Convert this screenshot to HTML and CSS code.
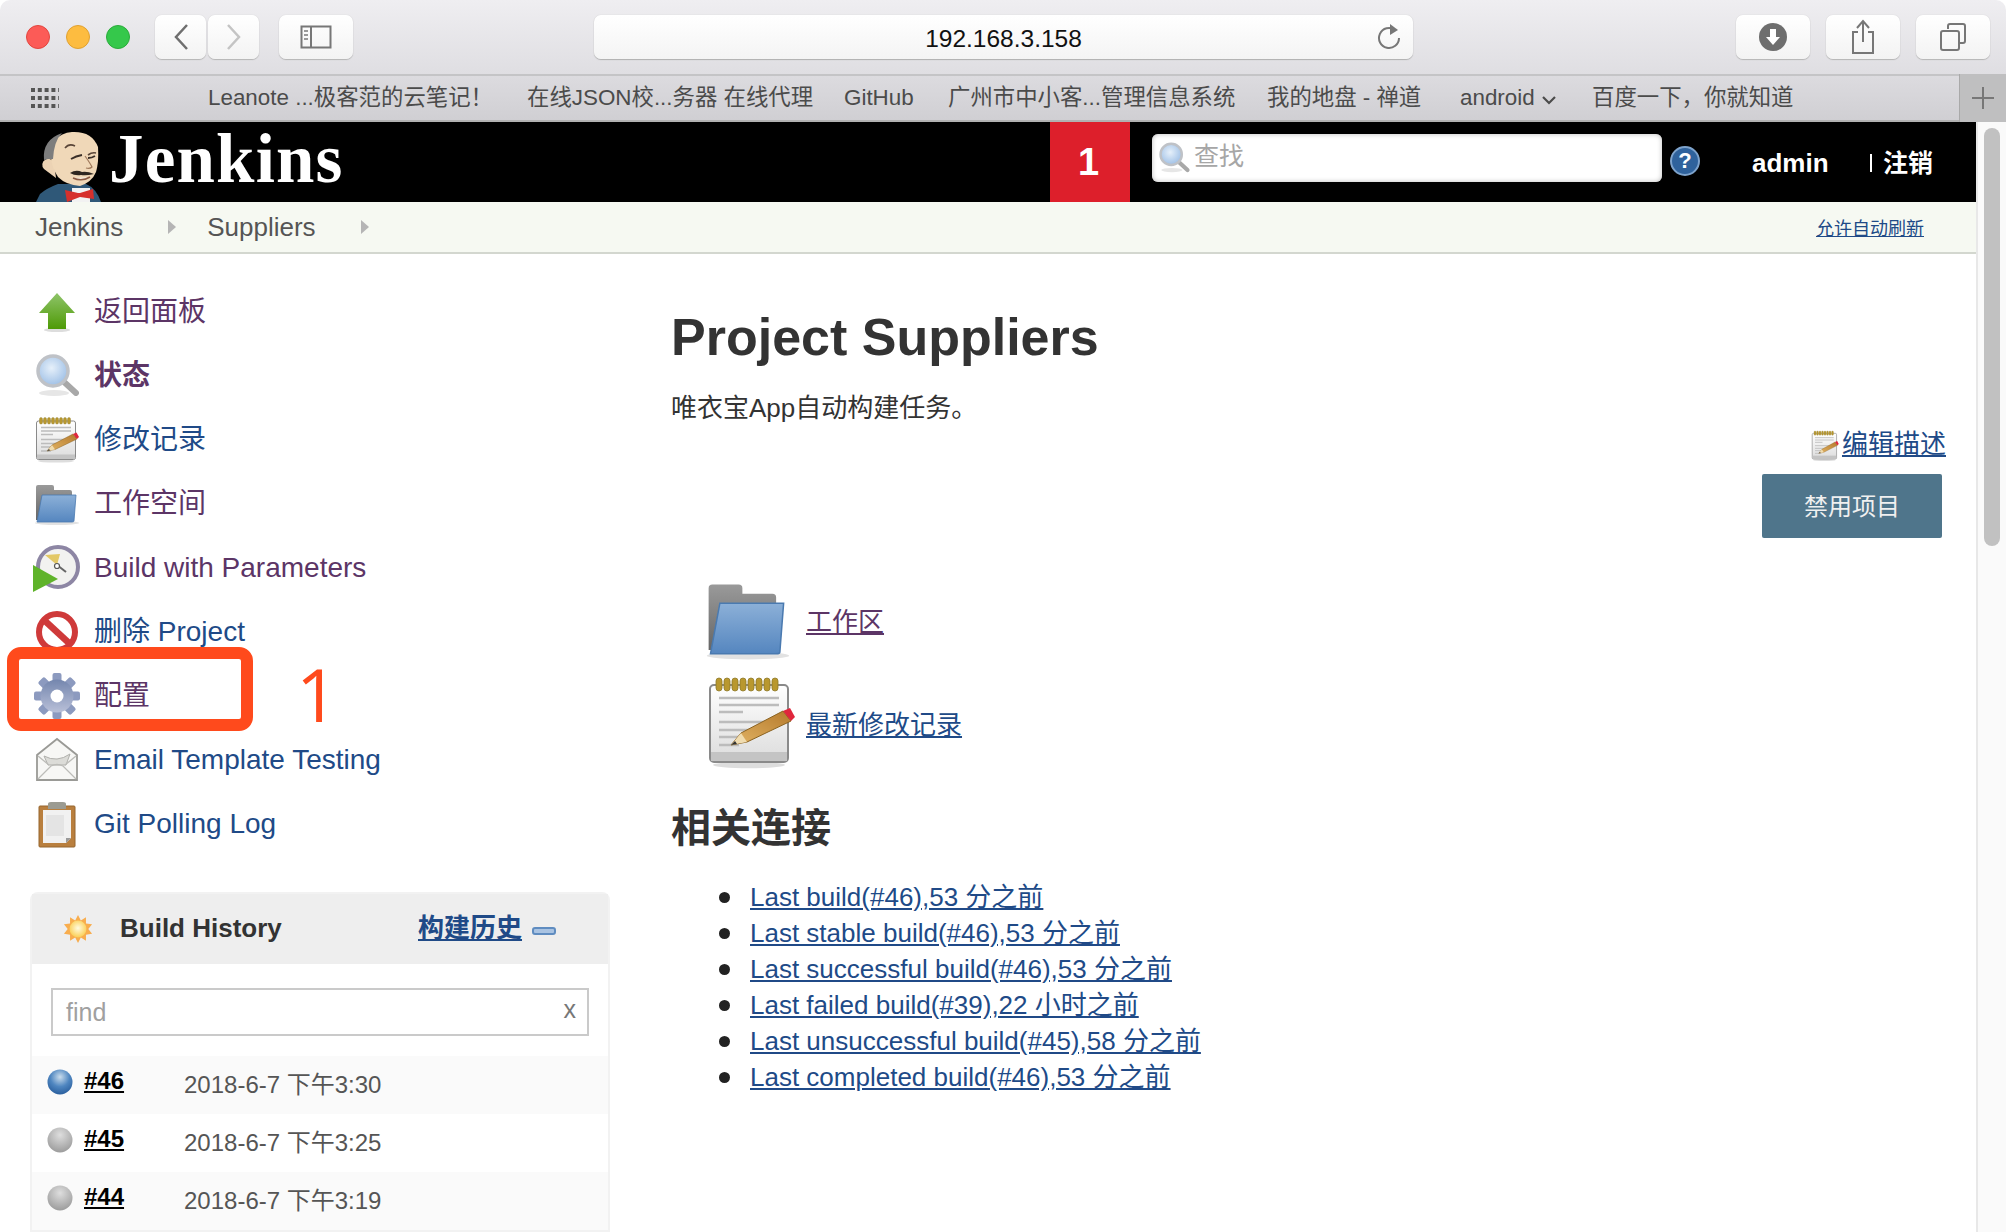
FILE: index.html
```html
<!DOCTYPE html>
<html lang="zh-CN">
<head>
  <meta charset="UTF-8">
  <title>Suppliers [Jenkins]</title>
  <link rel="stylesheet" href="styles.css">
</head>
<body>
  <svg class="defs" xmlns="http://www.w3.org/2000/svg">
    <defs>
      <linearGradient id="g-arrow" x1="0" y1="0" x2="0" y2="1"><stop offset="0" stop-color="#8fc46a"/><stop offset="1" stop-color="#4e9a06"/></linearGradient>
      <linearGradient id="g-page" x1="0" y1="0" x2="0" y2="1"><stop offset="0" stop-color="#fff"/><stop offset="1" stop-color="#dcdcdc"/></linearGradient>
      <linearGradient id="g-folder" x1="0" y1="0" x2="0" y2="1"><stop offset="0" stop-color="#8cb0d8"/><stop offset="1" stop-color="#5586bf"/></linearGradient>
      <linearGradient id="g-back" x1="0" y1="0" x2="0" y2="1"><stop offset="0" stop-color="#9a9a9a"/><stop offset="1" stop-color="#666"/></linearGradient>
      <linearGradient id="g-pencil" x1="0" y1="1" x2="1" y2="0"><stop offset="0" stop-color="#e3b566"/><stop offset="1" stop-color="#b57a2c"/></linearGradient>
      <linearGradient id="g-gear" x1="0" y1="0" x2="0" y2="1"><stop offset="0" stop-color="#7486ae"/><stop offset="1" stop-color="#b9c0d8"/></linearGradient>
      <radialGradient id="g-lens" cx=".45" cy=".4" r=".6"><stop offset="0" stop-color="#e6f0fa"/><stop offset="1" stop-color="#9fc0e6"/></radialGradient>
      <radialGradient id="g-blue" cx=".5" cy=".3" r=".7"><stop offset="0" stop-color="#c9dcec"/><stop offset=".55" stop-color="#4f86c0"/><stop offset="1" stop-color="#2a5f9e"/></radialGradient>
      <radialGradient id="g-grey" cx=".5" cy=".3" r=".7"><stop offset="0" stop-color="#dedede"/><stop offset="1" stop-color="#9c9c9c"/></radialGradient>
      <radialGradient id="g-sun" cx=".5" cy=".45" r=".55"><stop offset="0" stop-color="#fffbe0"/><stop offset="1" stop-color="#fbcf55"/></radialGradient>

      <symbol id="i-arrow" viewBox="0 0 48 48">
        <ellipse cx="24" cy="42" rx="13" ry="2" fill="#ddd"/>
        <path d="M24 5 42 25H33V41H15V25H6Z" fill="url(#g-arrow)"/>
      </symbol>
      <symbol id="i-search" viewBox="0 0 48 48">
        <ellipse cx="21" cy="41" rx="15" ry="3" fill="#e6e6e6"/>
        <path d="M30 29 43 41" stroke="#a8a8a8" stroke-width="6" stroke-linecap="round"/>
        <circle cx="20" cy="19" r="15" fill="url(#g-lens)" stroke="#bfc2c7" stroke-width="3.5"/>
      </symbol>
      <symbol id="i-notepad" viewBox="0 0 48 48">
        <ellipse cx="23" cy="45" rx="18" ry="1.6" fill="#ddd"/>
        <rect x="3.5" y="5" width="39" height="38.5" rx="2" fill="url(#g-page)" stroke="#8a8a8a"/>
        <rect x="4" y="38.5" width="38" height="4.5" fill="#c4c4c4"/>
        <g fill="#b9982e" stroke="#8e7a2a" stroke-width=".4">
          <rect x="6.500" y="1.500" width="3" height="6.500" rx="1.500"/><rect x="10.500" y="1.500" width="3" height="6.500" rx="1.500"/><rect x="14.500" y="1.500" width="3" height="6.500" rx="1.500"/><rect x="18.500" y="1.500" width="3" height="6.500" rx="1.500"/><rect x="22.500" y="1.500" width="3" height="6.500" rx="1.500"/><rect x="26.500" y="1.500" width="3" height="6.500" rx="1.500"/><rect x="30.500" y="1.500" width="3" height="6.500" rx="1.500"/><rect x="34.500" y="1.500" width="3" height="6.500" rx="1.500"/>
        </g>
        <path d="M8 11.500H38M8 15H38M8 18.500H20M8 23.500H38M8 27.500H28M8 31H24M8 35H18" stroke="#bcbcbc" stroke-width="1.300"/>
        <path d="M14 35 19 29 40 18 44 23 22 33.500Z" fill="url(#g-pencil)" stroke="#8a6220" stroke-width=".5"/>
        <path d="M14 35 19 29 22 33.500Z" fill="#f0dcb0"/>
        <path d="M14 35 16 33 17 34.500Z" fill="#333"/>
        <path d="M40 18 43.500 16.500 46 21 44 23Z" fill="#e0263c"/>
      </symbol>
      <symbol id="i-folder" viewBox="0 0 48 48">
        <ellipse cx="24" cy="43" rx="22" ry="2" fill="#e2e2e2"/>
        <path d="M3 7Q3 5 5 5H19Q21 5 21 7V10H37Q39 10 39 12V40H3Z" fill="url(#g-back)"/>
        <path d="M9 15H43L41 41Q41 42 39 42H4Z" fill="url(#g-folder)" stroke="#4a7ab0" stroke-width=".8"/>
      </symbol>
      <symbol id="i-clock" viewBox="0 0 48 48">
        <circle cx="25" cy="23" r="20" fill="#f2f2f0" stroke="#8d86a4" stroke-width="4"/>
        <path d="M12 11 27 10 24 21Z" fill="#e3c866"/>
        <path d="M24 21 33 28" stroke="#666" stroke-width="2"/>
        <circle cx="24" cy="22" r="2.500" fill="#fff" stroke="#555" stroke-width="1.200"/>
        <path d="M0 21 25 35 0 48Z" fill="#5fb32a"/>
      </symbol>
      <symbol id="i-stop" viewBox="0 0 48 48">
        <circle cx="24" cy="24" r="18" fill="#fff" stroke="#cf3a3a" stroke-width="6"/>
        <path d="M11 12 37 36" stroke="#cf3a3a" stroke-width="6.500"/>
      </symbol>
      <symbol id="i-gear" viewBox="0 0 48 48">
        <g fill="#8c9abf">
          <rect x="19.500" y="1" width="9" height="46" rx="2"/>
          <rect x="19.500" y="1" width="9" height="46" rx="2" transform="rotate(45 24 24)"/>
          <rect x="19.500" y="1" width="9" height="46" rx="2" transform="rotate(90 24 24)"/>
          <rect x="19.500" y="1" width="9" height="46" rx="2" transform="rotate(135 24 24)"/>
        </g>
        <circle cx="24" cy="24" r="16.500" fill="url(#g-gear)"/>
        <circle cx="24" cy="24" r="6.500" fill="#fff"/>
      </symbol>
      <symbol id="i-mail" viewBox="0 0 48 48">
        <path d="M4 19 24 3 44 19V44H4Z" fill="#f7f7f5" stroke="#9a9a96" stroke-width="1.800"/>
        <path d="M11 20Q24 27 37 18L33 29H15Z" fill="#dcdcd8" stroke="#b0b0ac"/>
        <path d="M5 43 18 30Q24 27 30 30L43 43M5 20 16 29M43 20 32 29" fill="none" stroke="#bcbcb8" stroke-width="1.300"/>
      </symbol>
      <symbol id="i-clip" viewBox="0 0 48 48">
        <rect x="6" y="6" width="36" height="41" rx="1" fill="#b97f3e" stroke="#96662e"/>
        <path d="M10 10H38V38L33 43H10Z" fill="#f1f1f1"/>
        <path d="M33 43V38H38Z" fill="#9a9a9a"/>
        <path d="M13 15H31V36H13Z" fill="#e4e4e4"/>
        <path d="M15 9V4Q15 2 18 2H30Q33 2 33 4V9Z" fill="#9b9b92"/>
      </symbol>
      <symbol id="i-sun" viewBox="0 0 32 32">
        <path d="M16 1 19 7 24.500 3.500 24.500 10 31 11 27 16 31 21 24.500 22 24.500 28.500 19 25 16 31 13 25 7.500 28.500 7.500 22 1 21 5 16 1 11 7.500 10 7.500 3.500 13 7Z" fill="#f8ad4e"/>
        <circle cx="16" cy="16" r="9" fill="url(#g-sun)"/>
      </symbol>
      <symbol id="i-butler" viewBox="0 0 92 80">
        <path d="M16 80 20 72Q27 66 38 62H66Q76 66 81 80Z" fill="#2f5878"/>
        <path d="M52 66H70V80H52Z" fill="#f2f2f2"/>
        <path d="M45 68 58 71 60 71 73 67 74 77 60 75 47 80Z" fill="#d6302c"/>
        <path d="M24 47A6 6 0 1 1 34 41L36 56Z" fill="#ecd3b4"/>
        <path d="M31 36Q30 12 52 10 72 9 78 25 79 40 76 50 72 60 60 64 46 63 38 55 32 46 31 36Z" fill="#f0d8b8"/>
        <path d="M24 38Q22 18 42 11 34 19 33 37L28 37Z" fill="#7d7d7d"/>
        <path d="M45 26Q49 21 55 24M68 33Q72 30 76 31" stroke="#5a4638" stroke-width="1.600" fill="none"/>
        <path d="M51 37Q56 34 62 33M68 36Q72 36 75 34" stroke="#3a2f28" stroke-width="1.800" fill="none"/>
        <path d="M65 34Q70 41 72 45 70 47 66 46" stroke="#a07a5c" stroke-width="1.200" fill="none"/>
        <path d="M50 51Q56 47 62 50 67 49 74 52 66 54 61 53 55 54 50 51Z" fill="#2e2620"/>
        <path d="M53 56Q62 60 70 55" stroke="#8a5a44" stroke-width="1.500" fill="#f7ece0"/>
      </symbol>
    </defs>
  </svg>

  <div class="window">
    <div class="toolbar">
      <div class="lights"><span class="light red"></span><span class="light yellow"></span><span class="light green"></span></div>
      <div class="nav-pair">
        <div class="tool-btn nav-btn"><svg width="16" height="28" viewBox="0 0 16 28"><path d="M14 2 3 14 14 26" fill="none" stroke="#6f6f6f" stroke-width="2.500"/></svg></div>
        <div class="tool-btn nav-btn"><svg width="16" height="28" viewBox="0 0 16 28"><path d="M2 2 13 14 2 26" fill="none" stroke="#c4c4c4" stroke-width="2.500"/></svg></div>
      </div>
      <div class="tool-btn side-btn"><svg width="32" height="24" viewBox="0 0 32 24"><rect x="1.500" y="1.500" width="29" height="21" fill="none" stroke="#777" stroke-width="2"/><path d="M11 2V22" stroke="#777" stroke-width="2"/><path d="M4 6H8M4 10H8M4 14H8" stroke="#999" stroke-width="2"/></svg></div>
      <div class="address">
        <span class="address-text">192.168.3.158</span>
        <svg class="reload" width="26" height="28" viewBox="0 0 26 28"><path d="M19 7A10 10 0 1 0 23 15" fill="none" stroke="#777" stroke-width="2"/><path d="M14 1 22 7 14 12Z" fill="#777"/></svg>
      </div>
      <div class="tool-right">
        <div class="tool-btn right-btn"><svg width="30" height="30" viewBox="0 0 30 30"><circle cx="15" cy="15" r="14" fill="#6e6e6e"/><path d="M12 7H18V15H22L15 23 8 15H12Z" fill="#fff"/></svg></div>
        <div class="tool-btn right-btn"><svg width="26" height="36" viewBox="0 0 26 36"><path d="M8 13H3V34H23V13H18M13 23V3M7 9 13 2 19 9" fill="none" stroke="#777" stroke-width="2"/></svg></div>
        <div class="tool-btn right-btn"><svg width="28" height="28" viewBox="0 0 28 28"><path d="M9 6V3Q9 1 11 1H24Q26 1 26 3V18Q26 20 24 20H20" fill="none" stroke="#777" stroke-width="2"/><rect x="2" y="8" width="18" height="19" rx="2" fill="none" stroke="#777" stroke-width="2"/></svg></div>
      </div>
    </div>

    <div class="bookmarks">
      <svg class="grid-icon" width="30" height="20" viewBox="0 0 30 20"><path d="M1 2H29M1 10H29M1 18H29" stroke="#555" stroke-width="4" stroke-dasharray="4 2.800"/></svg>
      <span class="bm bm-1">Leanote ...极客范的云笔记！</span>
      <span class="bm bm-2">在线JSON校...务器 在线代理</span>
      <span class="bm bm-3">GitHub</span>
      <span class="bm bm-4">广州市中小客...管理信息系统</span>
      <span class="bm bm-5">我的地盘 - 禅道</span>
      <span class="bm bm-6">android <svg width="14" height="10" viewBox="0 0 14 10"><path d="M1 2 7 8 13 2" fill="none" stroke="#4b4b4b" stroke-width="2.200"/></svg></span>
      <span class="bm bm-7">百度一下，你就知道</span>
      <div class="new-tab"><svg width="24" height="24" viewBox="0 0 24 24"><path d="M12 1V23M1 12H23" stroke="#777" stroke-width="2"/></svg></div>
    </div>

    <div class="viewport">
      <div class="page">
        <header class="jk-header">
          <svg class="butler" width="92" height="80"><use href="#i-butler"/></svg>
          <span class="jk-title">Jenkins</span>
          <span class="jk-badge">1</span>
          <div class="jk-search">
            <svg width="34" height="34"><use href="#i-search"/></svg>
            <span class="jk-placeholder">查找</span>
          </div>
          <span class="jk-help">?</span>
          <span class="jk-user">admin</span>
          <span class="jk-logout"><span class="jk-sep"></span>注销</span>
        </header>

        <div class="crumbs">
          <span class="crumb">Jenkins</span><span class="crumb-arrow"></span>
          <span class="crumb">Suppliers</span><span class="crumb-arrow"></span>
          <a class="auto-refresh">允许自动刷新</a>
        </div>

        <div class="layout">
          <aside class="side">
            <ul class="tasks">
              <li class="task visited"><svg width="48" height="48"><use href="#i-arrow"/></svg>返回面板</li>
              <li class="task visited current"><svg width="48" height="48"><use href="#i-search"/></svg>状态</li>
              <li class="task"><svg width="48" height="48"><use href="#i-notepad"/></svg>修改记录</li>
              <li class="task visited"><svg width="48" height="48"><use href="#i-folder"/></svg>工作空间</li>
              <li class="task visited"><svg width="48" height="48"><use href="#i-clock"/></svg>Build with Parameters</li>
              <li class="task"><svg width="48" height="48"><use href="#i-stop"/></svg>删除 Project</li>
              <li class="task visited"><svg width="48" height="48"><use href="#i-gear"/></svg>配置</li>
              <li class="task"><svg width="48" height="48"><use href="#i-mail"/></svg>Email Template Testing</li>
              <li class="task"><svg width="48" height="48"><use href="#i-clip"/></svg>Git Polling Log</li>
            </ul>

            <section class="history">
              <div class="history-head">
                <svg width="30" height="30"><use href="#i-sun"/></svg>
                <span class="history-title">Build History</span>
                <a class="history-link">构建历史</a>
                <span class="history-minus"></span>
              </div>
              <div class="history-find">
                <div class="find-box"><span>find</span><span class="find-x">x</span></div>
              </div>
              <div class="build-row">
                <svg width="26" height="28" viewBox="0 0 26 28"><circle cx="13" cy="14" r="12.500" fill="url(#g-blue)"/></svg>
                <a class="build-num">#46</a><span class="build-date">2018-6-7 下午3:30</span>
              </div>
              <div class="build-row">
                <svg width="26" height="28" viewBox="0 0 26 28"><circle cx="13" cy="14" r="12.500" fill="url(#g-grey)"/></svg>
                <a class="build-num">#45</a><span class="build-date">2018-6-7 下午3:25</span>
              </div>
              <div class="build-row">
                <svg width="26" height="28" viewBox="0 0 26 28"><circle cx="13" cy="14" r="12.500" fill="url(#g-grey)"/></svg>
                <a class="build-num">#44</a><span class="build-date">2018-6-7 下午3:19</span>
              </div>
            </section>
          </aside>

          <main class="main">
            <h1 class="title">Project Suppliers</h1>
            <p class="desc">唯衣宝App自动构建任务。</p>
            <div class="edit-row">
              <svg class="edit-icon" width="30" height="32" viewBox="0 0 48 48" preserveAspectRatio="none"><use href="#i-notepad"/></svg>
              <a class="link">编辑描述</a>
            </div>
            <div class="disable-row"><button class="disable-btn">禁用项目</button></div>

            <div class="big-link">
              <svg class="big-folder" width="90" height="90"><use href="#i-folder"/></svg>
              <a class="link purple">工作区</a>
            </div>
            <div class="big-link">
              <svg width="96" height="96"><use href="#i-notepad"/></svg>
              <a class="link">最新修改记录</a>
            </div>

            <h2 class="subtitle">相关连接</h2>
            <ul class="permalinks">
              <li><a class="link">Last build(#46),53 分之前</a></li>
              <li><a class="link">Last stable build(#46),53 分之前</a></li>
              <li><a class="link">Last successful build(#46),53 分之前</a></li>
              <li><a class="link">Last failed build(#39),22 小时之前</a></li>
              <li><a class="link">Last unsuccessful build(#45),58 分之前</a></li>
              <li><a class="link">Last completed build(#46),53 分之前</a></li>
            </ul>
          </main>
        </div>
      </div>
      <div class="scrollbar"><div class="scroll-thumb"></div></div>

      <div class="callout"></div>
      <div class="callout-num">1</div>
    </div>
  </div>
</body>
</html>
```

FILE: styles.css
```css
html, body {
  margin: 0;
  padding: 0;
  background: #fff;
}
body {
  width: 2006px;
  height: 1232px;
  overflow: hidden;
  font-family: "Liberation Sans", "Noto Sans CJK SC", sans-serif;
}
ul {
  list-style: none;
  margin: 0;
  padding: 0;
}
.defs {
  position: absolute;
  width: 0;
  height: 0;
}
.window {
  display: flex;
  flex-direction: column;
  height: 1232px;
  border-radius: 10px 10px 0 0;
  overflow: hidden;
}

/* browser bar */
.toolbar {
  display: flex;
  align-items: center;
  height: 74px;
  box-sizing: border-box;
  padding: 0 16px 0 26px;
  background: linear-gradient(#efeef1, #dfdee2);
}
.lights {
  display: flex;
  gap: 16px;
  width: 129px;
}
.light {
  width: 24px;
  height: 24px;
  border-radius: 50%;
  box-sizing: border-box;
}
.light.red { background: #fc5b57; border: 1px solid #e2463f; }
.light.yellow { background: #fdbc40; border: 1px solid #e0a131; }
.light.green { background: #35c84b; border: 1px solid #2bab3b; }
.tool-btn {
  display: flex;
  align-items: center;
  justify-content: center;
  height: 44px;
  box-sizing: border-box;
  background: linear-gradient(#fff, #f3f3f3);
  border-radius: 7px;
  box-shadow: 0 1px 1px #b5b5b5, 0 0 1px #c4c4c4;
}
.nav-pair {
  display: flex;
  gap: 2px;
}
.nav-btn { width: 51px; }
.side-btn {
  width: 74px;
  margin-left: 20px;
}
.address {
  position: relative;
  display: flex;
  align-items: center;
  justify-content: center;
  width: 819px;
  height: 44px;
  margin-left: 241px;
  background: linear-gradient(#fff, #f4f4f4);
  border-radius: 7px;
  box-shadow: 0 1px 1px #b0b0b0, 0 0 1px #bdbdbd;
}
.address-text {
  font-size: 24.500px;
  color: #111;
  margin-top: 3px;
}
.reload {
  position: absolute;
  right: 11px;
  top: 8px;
}
.tool-right {
  display: flex;
  gap: 16px;
  margin-left: 323px;
}
.right-btn { width: 74px; }

.bookmarks {
  position: relative;
  display: flex;
  align-items: center;
  height: 48px;
  box-sizing: border-box;
  background: linear-gradient(#dcdbdf, #d0cfd3);
  border-top: 2px solid #c4c4c6;
  border-bottom: 2px solid #b1b1b1;
  font-size: 22.400px;
  color: #4b4b4b;
}
.grid-icon { margin-left: 30px; }
.bm {
  white-space: nowrap;
  line-height: 30px;
}
.bm-1 { margin-left: 148px; width: 319px; }
.bm-2 { width: 317px; }
.bm-3 { width: 104px; }
.bm-4 { width: 319px; }
.bm-5 { width: 193px; }
.bm-6 { width: 132px; }
.bm-6 svg { margin-left: 1px; }
.new-tab {
  position: absolute;
  right: 0;
  top: -2px;
  bottom: -2px;
  width: 47px;
  display: flex;
  align-items: center;
  justify-content: center;
  background: #bfbfc0;
  border-left: 1px solid #a9a9a9;
  box-sizing: border-box;
}

/* page */
.viewport {
  position: relative;
  display: flex;
  flex: 1;
  min-height: 0;
}
.page {
  width: 1976px;
  overflow: hidden;
}
.scrollbar {
  width: 30px;
  box-sizing: border-box;
  background: #fafafa;
  border-left: 2px solid #e8e8e8;
  padding: 6px 6px 0 6px;
}
.scroll-thumb {
  width: 16px;
  height: 418px;
  background: #c1c1c1;
  border-radius: 8px;
}

.jk-header {
  display: flex;
  align-items: center;
  height: 80px;
  background: #000;
  color: #fff;
  overflow: hidden;
}
.butler {
  margin-left: 20px;
  flex: none;
  filter: blur(0.5px);
}
.jk-title {
  font-family: "Liberation Serif", serif;
  font-weight: bold;
  font-size: 69px;
  line-height: 72px;
  margin: -7px 0 0 -3px;
  width: 941px;
  letter-spacing: 1.2px;
}
.jk-badge {
  display: flex;
  align-items: center;
  justify-content: center;
  width: 80px;
  height: 80px;
  padding-right: 3px;
  box-sizing: border-box;
  background: #dd1f2b;
  font-size: 38px;
  font-weight: bold;
}
.jk-search {
  display: flex;
  align-items: center;
  width: 510px;
  height: 48px;
  margin: -8px 0 0 22px;
  padding-left: 5px;
  box-sizing: border-box;
  background: #fff;
  border-radius: 6px;
  box-shadow: inset 0 0 5px #bbb;
}
.jk-placeholder {
  font-size: 25px;
  line-height: 30px;
  color: #a6a6a6;
  margin: -4px 0 0 3px;
}
.jk-help {
  width: 30px;
  height: 30px;
  margin: -2px 0 0 8px;
  line-height: 26px;
  text-align: center;
  box-sizing: border-box;
  border-radius: 50%;
  background: #2f629c;
  border: 2px solid #7ea3cc;
  color: #fff;
  font-size: 22px;
  font-weight: bold;
}
.jk-user {
  margin: 2px 0 0 52px;
  width: 119px;
  font-size: 26px;
  font-weight: bold;
}
.jk-logout {
  display: flex;
  align-items: center;
  font-size: 25px;
  line-height: 30px;
  font-weight: bold;
  margin: 2px 0 0 -1px;
}
.jk-sep {
  width: 2px;
  height: 18px;
  margin-right: 11px;
  background: #fff;
}

.crumbs {
  display: flex;
  align-items: center;
  height: 52px;
  box-sizing: border-box;
  padding: 0 52px 0 35px;
  background: #f6f9f2;
  border-bottom: 2px solid #d3d7cf;
  font-size: 26px;
  color: #555;
}
.crumb-arrow {
  width: 0;
  height: 0;
  margin: 0 31px 0 45px;
  border-left: 8px solid #b5b5b5;
  border-top: 7px solid transparent;
  border-bottom: 7px solid transparent;
}
.auto-refresh {
  margin-left: auto;
  font-size: 18px;
  color: #204a87;
  text-decoration: underline;
}

.layout {
  display: flex;
}
.side {
  width: 671px;
  flex: none;
  box-sizing: border-box;
  padding: 26px 0 0 30px;
}
.task {
  display: flex;
  align-items: center;
  gap: 13px;
  height: 64px;
  margin-left: 3px;
  font-size: 28px;
  line-height: 32px;
  color: #204a87;
}
.task svg { filter: blur(0.4px); }
.task.visited { color: #5c3566; }
.task.current { font-weight: bold; }
.history {
  width: 580px;
  margin-top: 36px;
  box-sizing: border-box;
  border: 2px solid #f2f2f2;
  border-radius: 8px 8px 0 0;
}
.history-head {
  display: flex;
  align-items: center;
  height: 70px;
  padding-left: 31px;
  background: #eee;
}
.history-title {
  width: 298px;
  margin: -2px 0 0 27px;
  font-size: 26px;
  line-height: 30px;
  font-weight: bold;
  color: #333;
}
.history-link {
  margin-top: -2px;
  font-size: 26px;
  line-height: 30px;
  font-weight: bold;
  color: #204a87;
  text-decoration: underline;
}
.history-minus {
  width: 24px;
  height: 8px;
  margin: 4px 0 0 10px;
  box-sizing: border-box;
  background: #a9c3e2;
  border: 2px solid #5f8cc0;
  border-radius: 3px;
}
.history-find {
  padding: 24px 19px 20px 19px;
}
.find-box {
  display: flex;
  justify-content: space-between;
  align-items: center;
  height: 48px;
  box-sizing: border-box;
  padding: 0 11px 0 13px;
  border: 2px solid #cacaca;
  font-size: 25px;
  color: #a0a0a0;
}
.find-x {
  font-size: 25px;
  color: #777;
  margin-top: -6px;
}
.build-row {
  display: flex;
  align-items: center;
  height: 58px;
  padding-left: 15px;
}
.build-row:nth-child(odd) { background: #fafafa; }
.build-row svg {
  margin-top: -6px;
  filter: blur(0.6px);
}
.build-num {
  margin: -8px 0 0 11px;
  width: 100px;
  font-size: 24px;
  font-weight: bold;
  color: #000;
  text-decoration: underline;
}
.build-date {
  font-size: 24px;
  line-height: 28px;
  color: #555;
}

.main {
  flex: 1;
  padding-right: 30px;
  padding-top: 53px;
}
.title {
  margin: 0;
  font-size: 52px;
  line-height: 60px;
  font-weight: bold;
  color: #333;
}
.desc {
  margin: 21px 0 0 0;
  font-size: 26px;
  line-height: 40px;
  color: #333;
}
.link {
  color: #204a87;
  text-decoration: underline;
}
.link.purple { color: #5c3566; }
.edit-row {
  display: flex;
  justify-content: flex-end;
  align-items: center;
  gap: 2px;
  height: 32px;
  font-size: 26px;
  line-height: 32px;
}
.edit-icon {
  margin-top: 4px;
  filter: blur(0.3px);
}
.disable-row {
  display: flex;
  justify-content: flex-end;
  margin-top: 14px;
  padding-right: 4px;
}
.disable-btn {
  width: 180px;
  height: 64px;
  padding: 0 0 4px 0;
  border: 0;
  border-radius: 2px;
  background: #4f758b;
  color: #f0f0f0;
  font-family: inherit;
  font-size: 24px;
}
.big-link {
  display: flex;
  align-items: center;
  gap: 7px;
  height: 103px;
  margin-left: 32px;
  font-size: 26px;
  line-height: 32px;
}
.big-link svg { filter: blur(0.5px); }
.big-folder { margin-right: 6px; }
.big-link .link { margin-top: 4px; }
.disable-row + .big-link { margin-top: 30px; }
.subtitle {
  margin: 30px 0 0 0;
  font-size: 40px;
  line-height: 48px;
  font-weight: bold;
  color: #333;
}
.permalinks {
  margin-top: 27px;
  padding-left: 79px;
  font-size: 26px;
  line-height: 36px;
}
.permalinks li::before {
  content: "";
  display: inline-block;
  width: 11px;
  height: 11px;
  margin: 0 20px 3px -31px;
  border-radius: 50%;
  background: #222;
}

/* red annotation drawn over the screenshot */
.callout {
  position: absolute;
  left: 7px;
  top: 525px;
  width: 246px;
  height: 84px;
  box-sizing: border-box;
  border: 12px solid #ff4a1c;
  border-radius: 14px;
}
.callout-num {
  position: absolute;
  left: 296px;
  top: 522px;
  font-family: "Open Sans", sans-serif;
  font-weight: 400;
  font-size: 74px;
  line-height: 100px;
  color: #ff4a1c;
}
```
